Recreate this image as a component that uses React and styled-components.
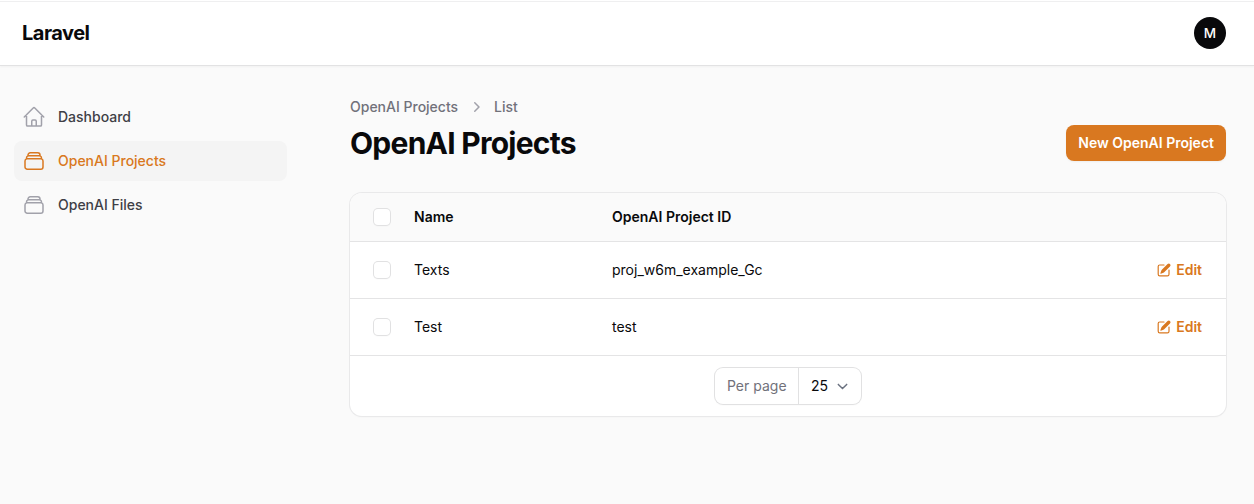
import React from "react";
import styled, { createGlobalStyle } from "styled-components";
import {
  HiOutlineHome,
  HiOutlineRectangleStack,
  HiMiniPencilSquare,
  HiMiniChevronRight,
} from "react-icons/hi2";

const GlobalStyle = createGlobalStyle`
  *, *::before, *::after { box-sizing: border-box; }
  body {
    margin: 0;
    background: #fafafa;
    color: #09090b;
    font: 400 14px/20px Inter, sans-serif;
    -webkit-font-smoothing: antialiased;
  }
  button { font: inherit; border: 0; cursor: pointer; }
  a { color: inherit; text-decoration: none; }
`;

const Page = styled.div`
  min-height: 504px;
`;

const Topbar = styled.header`
  display: flex;
  align-items: center;
  justify-content: space-between;
  height: 66px;
  padding: 0 28px 0 22px;
  background: #fff;
  border-bottom: 1px solid #e2e2e3;
  box-shadow: inset 0 1px 0 #fff, inset 0 2px 0 #efeff0, 0 1px 2px rgba(0, 0, 0, 0.04);
`;

const Brand = styled.a`
  font-size: 20px;
  line-height: 20px;
  font-weight: 700;
  letter-spacing: -0.5px;
`;

const Avatar = styled.div`
  display: flex;
  align-items: center;
  justify-content: center;
  width: 32px;
  height: 32px;
  margin-top: 1px;
  border-radius: 50%;
  background: #09090b;
  color: #fff;
  font-size: 13.5px;
  font-weight: 500;
`;

const Body = styled.div`
  display: flex;
`;

const Sidebar = styled.nav`
  display: flex;
  flex-direction: column;
  gap: 4px;
  width: 287px;
  padding: 31px 0 0 14px;
`;

const NavItem = styled.a`
  display: flex;
  align-items: center;
  gap: 12px;
  height: 40px;
  padding: 0 8px;
  border-radius: 8px;
  font-weight: 500;
  color: ${(p) => (p.$active ? "#d97820" : "#3f3f46")};
  background: ${(p) => (p.$active ? "#f4f4f4" : "transparent")};

  svg {
    width: 24px;
    height: 24px;
    color: ${(p) => (p.$active ? "#d97820" : "#a1a1aa")};
  }
`;

const Main = styled.main`
  flex: 1;
  padding: 31px 28px 0 63px;
`;

const Breadcrumbs = styled.div`
  display: flex;
  align-items: center;
  gap: 8px;
  font-weight: 500;
  color: #71717a;

  svg {
    width: 20px;
    height: 20px;
    color: #a1a1aa;
  }
`;

const HeadingRow = styled.div`
  display: flex;
  align-items: center;
  justify-content: space-between;
  height: 36px;
  margin: 8px 0 32px;
`;

const Heading = styled.h1`
  margin: 0;
  font-size: 30px;
  line-height: 36px;
  font-weight: 700;
  letter-spacing: -0.75px;
`;

const PrimaryButton = styled.button`
  height: 36px;
  padding: 0 12px;
  border-radius: 8px;
  background: #d97820;
  color: #fff;
  font-weight: 600;
  white-space: nowrap;
  box-shadow: 0 1px 2px rgba(0, 0, 0, 0.05);
`;

const Card = styled.section`
  overflow: hidden;
  border-radius: 12px;
  background: #fff;
  box-shadow: 0 0 0 1px #e9e9ea, 0 1px 2px rgba(0, 0, 0, 0.05);
`;

const Row = styled.div`
  display: grid;
  grid-template-columns: 40px 198px 1fr auto;
  align-items: center;
  height: ${(p) => (p.$head ? 49 : 57)}px;
  padding: 0 24px;
  border-bottom: 1px solid #e4e4e5;
  background: ${(p) => (p.$head ? "#fafafa" : "#fff")};
  font-weight: ${(p) => (p.$head ? 600 : 400)};
`;

const Checkbox = styled.input.attrs({ type: "checkbox" })`
  appearance: none;
  width: 16px;
  height: 16px;
  margin: 0;
  border-radius: 4px;
  background: #fff;
  box-shadow: 0 0 0 1px #e1e1e2, 0 1px 2px rgba(0, 0, 0, 0.05);
`;

const EditLink = styled.a`
  display: flex;
  align-items: center;
  gap: 4px;
  color: #d97820;
  font-weight: 600;

  svg {
    width: 16px;
    height: 16px;
  }
`;

const Footer = styled.footer`
  display: flex;
  justify-content: center;
  padding: 12px 0;
`;

const PerPage = styled.div`
  display: flex;
  height: 36px;
  border-radius: 8px;
  background: #fff;
  box-shadow: 0 0 0 1px #e1e1e2, 0 1px 2px rgba(0, 0, 0, 0.05);
`;

const PerPageLabel = styled.span`
  display: flex;
  align-items: center;
  width: 84px;
  padding-left: 12px;
  border-right: 1px solid #e1e1e2;
  color: #71717a;
`;

const PerPageValue = styled.span`
  display: flex;
  align-items: center;
  justify-content: space-between;
  width: 62px;
  padding: 0 8px 0 12px;

  svg {
    width: 21px;
    height: 21px;
  }
`;

const records = [
  { name: "Texts", projectId: "proj_w6m_example_Gc" },
  { name: "Test", projectId: "test" },
];

export default function App() {
  return (
    <Page>
      <GlobalStyle />
      <Topbar>
        <Brand>Laravel</Brand>
        <Avatar>M</Avatar>
      </Topbar>
      <Body>
        <Sidebar>
          <NavItem>
            <HiOutlineHome />
            Dashboard
          </NavItem>
          <NavItem $active>
            <HiOutlineRectangleStack />
            OpenAI Projects
          </NavItem>
          <NavItem>
            <HiOutlineRectangleStack />
            OpenAI Files
          </NavItem>
        </Sidebar>
        <Main>
          <Breadcrumbs>
            <a>OpenAI Projects</a>
            <HiMiniChevronRight />
            <a>List</a>
          </Breadcrumbs>
          <HeadingRow>
            <Heading>OpenAI Projects</Heading>
            <PrimaryButton>New OpenAI Project</PrimaryButton>
          </HeadingRow>
          <Card>
            <Row $head>
              <Checkbox />
              <span>Name</span>
              <span>OpenAI Project ID</span>
            </Row>
            {records.map((record) => (
              <Row key={record.name}>
                <Checkbox />
                <span>{record.name}</span>
                <span>{record.projectId}</span>
                <EditLink>
                  <HiMiniPencilSquare />
                  Edit
                </EditLink>
              </Row>
            ))}
            <Footer>
              <PerPage>
                <PerPageLabel>Per page</PerPageLabel>
                <PerPageValue>
                  25
                  <svg viewBox="0 0 20 20" fill="none">
                    <path
                      d="M6 8l4 4 4-4"
                      stroke="#6b7280"
                      strokeWidth="1.4"
                      strokeLinecap="round"
                      strokeLinejoin="round"
                    />
                  </svg>
                </PerPageValue>
              </PerPage>
            </Footer>
          </Card>
        </Main>
      </Body>
    </Page>
  );
}
